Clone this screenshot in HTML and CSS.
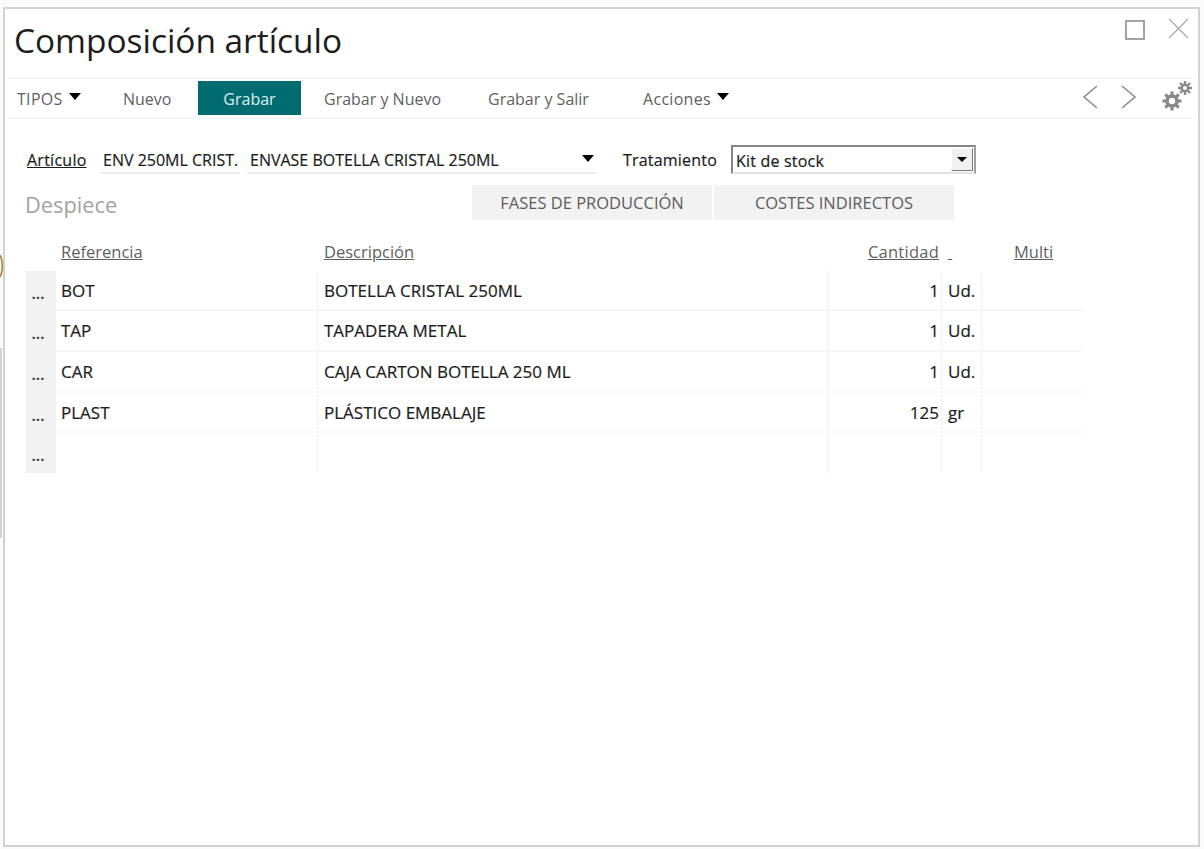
FILE: index.html
```html
<!DOCTYPE html>
<html lang="es">
<head>
<meta charset="utf-8">
<title>Composición artículo</title>
<link rel="stylesheet" href="styles.css">
</head>
<body>
<svg class="behind-arc" width="3" height="24" viewBox="0 0 3 24"><path d="M0 1C3 6 3 18 0 23" fill="none" stroke="#a8742c" stroke-width="1.4"/></svg>
<div class="behind-bar"></div>
<div class="window">
  <header class="titlebar">
    <h1 class="title">Composición artículo</h1>
    <div class="winctl">
      <svg width="20" height="20" viewBox="0 0 20 20"><rect x="1" y="1" width="18" height="18" fill="none" stroke="#8c8c8c" stroke-width="1.6"/></svg>
      <svg class="ic-close" width="21" height="21" viewBox="0 0 21 21"><path d="M1 1L20 20M20 1L1 20" fill="none" stroke="#a6a6a6" stroke-width="1.1"/></svg>
    </div>
  </header>
  <nav class="toolbar">
    <span class="tool tipos">TIPOS<i class="caret"></i></span>
    <span class="tool nuevo">Nuevo</span>
    <span class="tool grabar">Grabar</span>
    <span class="tool gnuevo">Grabar y Nuevo</span>
    <span class="tool gsalir">Grabar y Salir</span>
    <span class="tool acciones">Acciones<i class="caret"></i></span>
    <div class="toolright">
      <svg width="16" height="24" viewBox="0 0 16 24"><path d="M15 1L2 12L15 23" fill="none" stroke="#8c8c8c" stroke-width="1.6"/></svg>
      <svg class="next" width="16" height="24" viewBox="0 0 16 24"><path d="M1 1L14 12L1 23" fill="none" stroke="#8c8c8c" stroke-width="1.6"/></svg>
      <svg class="gears" width="32" height="32" viewBox="0 0 32 32">
        <g fill="none" stroke="#8a8a8a">
          <circle cx="11" cy="20" r="5" stroke-width="3.6"/>
          <path d="M11 10.500V14M11 26V29.500M1.500 20H5M17 20H20.500M4.300 13.300L6.800 15.800M15.200 24.200L17.700 26.700M4.300 26.700L6.800 24.200M15.200 15.800L17.700 13.300" stroke-width="3.2"/>
          <circle cx="24" cy="7" r="3.300" stroke-width="2.600"/>
          <path d="M24 0V3M24 11V14M17 7H20M28 7H31M19 2L21 4M27 10L29 12M19 12L21 10M27 4L29 2" stroke-width="2.400"/>
        </g>
      </svg>
    </div>
  </nav>
  <section class="form">
    <u class="lbl-art">Artículo</u>
    <span class="field code">ENV 250ML CRIST.</span>
    <span class="field desc">ENVASE BOTELLA CRISTAL 250ML<i class="caret"></i></span>
    <span class="lbl-trat">Tratamiento</span>
    <span class="select"><span class="select-val">Kit de stock</span><span class="select-btn"><i class="caret small"></i></span></span>
  </section>
  <section class="tabsrow">
    <h2 class="sub">Despiece</h2>
    <div class="tabs">
      <span class="tab">FASES DE PRODUCCIÓN</span>
      <span class="tab">COSTES INDIRECTOS</span>
    </div>
  </section>
  <section class="grid">
    <div class="gh"></div>
    <div class="gh"><u>Referencia</u></div>
    <div class="gh"><u>Descripción</u></div>
    <div class="gh num"><u>Cantidad</u></div>
    <div class="gh"><u>&nbsp;</u></div>
    <div class="gh multi"><u>Multi</u></div>

    <div class="dots">...</div><div class="c">BOT</div><div class="c">BOTELLA CRISTAL 250ML</div><div class="c num">1</div><div class="c">Ud.</div><div class="c"></div>
    <div class="dots">...</div><div class="c">TAP</div><div class="c">TAPADERA METAL</div><div class="c num">1</div><div class="c">Ud.</div><div class="c"></div>
    <div class="dots">...</div><div class="c">CAR</div><div class="c">CAJA CARTON BOTELLA 250 ML</div><div class="c num">1</div><div class="c">Ud.</div><div class="c"></div>
    <div class="dots">...</div><div class="c">PLAST</div><div class="c">PLÁSTICO EMBALAJE</div><div class="c num">125</div><div class="c">gr</div><div class="c"></div>
    <div class="dots">...</div><div class="c last"></div><div class="c last"></div><div class="c last"></div><div class="c last"></div><div class="c last"></div>
  </section>
</div>
</body>
</html>
```
FILE: styles.css
```css
* { box-sizing: border-box; }
html, body { margin: 0; height: 849px; overflow: hidden; }
body {
  background: #fbfbfb;
  padding: 7px 0 1px 3px;
  font-family: "Open Sans", "Noto Sans", sans-serif;
  font-size: 16px;
  color: #1c1c1c;
  position: relative;
}
.behind-arc { position: absolute; left: 0; top: 254px; }
.behind-bar {
  position: absolute;
  left: 0; top: 348px;
  width: 2px; height: 190px;
  background: #d4d4d4;
}
.window {
  width: 1197px;
  height: 840px;
  background: #fff;
  border: 2px solid #d2d2d2;
  padding: 0 0 0 3px;
}
.titlebar { height: 68px; display: flex; justify-content: space-between; }
.title {
  margin: 6px 0 0 6px;
  font-weight: 400;
  font-size: 33.400px;
  line-height: 50px;
  color: #1d1d1d;
}
.winctl { display: flex; gap: 23px; padding: 11px 9px 0 0; align-items: flex-start; }
.ic-close { margin-top: -2px; }
.toolbar {
  height: 42px;
  width: 1185px;
  border-top: 2px solid #f4f4f4;
  border-bottom: 2px solid #f4f4f4;
  display: flex;
  align-items: center;
  color: #5f5f5f;
}
.tool { display: flex; align-items: center; height: 34px; flex: none; padding-top: 2px; }
.caret {
  display: inline-block;
  width: 0; height: 0;
  border-left: 6.500px solid transparent;
  border-right: 6.500px solid transparent;
  border-top: 7px solid #000;
}
.tipos { width: 115px; padding-left: 9px; letter-spacing: .3px; }
.tipos .caret, .acciones .caret { margin: -5px 0 0 6px; }
.nuevo { width: 75px; }
.grabar {
  width: 103px;
  background: #016c70;
  color: #dfeeee;
  justify-content: center;
  margin-top: -1px;
}
.gnuevo { width: 164px; padding-left: 23px; }
.gsalir { width: 178px; padding-left: 23px; }
.acciones { letter-spacing: .3px; }
.toolright {
  margin-left: auto;
  display: flex;
  align-items: center;
  margin-top: -2px;
}
.toolright .next { margin-left: 23px; }
.toolright .gears { margin-left: 24px; }
.form {
  display: flex;
  align-items: flex-start;
  height: 39px;
  margin-top: 27px;
  padding-left: 19px;
  -webkit-text-stroke: .2px #1c1c1c;
}
.lbl-art { width: 73px; line-height: 29px; letter-spacing: .25px; }
.field {
  display: flex;
  align-items: center;
  justify-content: space-between;
  height: 28px;
  border-bottom: 2px solid #eeeeee;
  padding: 2px 0 0 3px;
  margin-right: 7px;
  white-space: nowrap;
}
.code { width: 140px; }
.desc { width: 350px; padding-right: 3px; }
.desc .caret { margin-top: -4px; }
.lbl-trat { margin-left: 19px; width: 108px; line-height: 28px; letter-spacing: .2px; }
.select {
  width: 245px;
  height: 29px;
  margin-top: -1px;
  border: 2px solid;
  border-color: #858585 #a0a0a0 #e2e2e2 #858585;
  display: flex;
  justify-content: space-between;
  padding: 1px;
}
.select-val { padding-left: 2px; line-height: 26px; letter-spacing: .2px; }
.select-btn {
  width: 22px;
  background: #f0f0f0;
  border: 1px solid;
  border-color: #fff #777 #777 #fff;
  display: flex;
  align-items: center;
  justify-content: center;
}
.caret.small {
  border-left-width: 5px;
  border-right-width: 5px;
  border-top-width: 5px;
}
.tabsrow {
  display: flex;
  height: 35px;
  padding-left: 17px;
}
.sub {
  margin: 0;
  width: 447px;
  font-weight: 400;
  font-size: 21.800px;
  line-height: 40px;
  color: #a2a2a2;
}
.tabs { display: flex; gap: 2px; }
.tab {
  background: #f2f2f2;
  color: #5c5c5c;
  display: flex;
  align-items: center;
  justify-content: center;
  width: 240px;
  height: 35px;
  font-size: 16.500px;
}
.grid {
  display: grid;
  grid-template-columns: 30px 263px 510px 114px 40px 100px;
  grid-template-rows: 34px 40px 41px 41px 40px 40px;
  margin: 17px 0 0 18px;
  width: 1057px;
  font-size: 17px;
}
.gh {
  padding-left: 5px;
  color: #5f5f5f;
  font-size: 16.500px;
  font-weight: 400;
  line-height: 30px;
}
.gh.num { text-align: right; padding-right: 4px; }
.gh.num u { letter-spacing: .25px; }
.gh.multi { padding-left: 31px; }
.dots {
  background: #f2f2f2;
  text-align: center;
  font-size: 15px;
  line-height: 44px;
  font-weight: 700;
  color: #444;
  padding-right: 6px;
}
.c {
  padding-left: 5px;
  line-height: 40px;
  border-bottom: 2px solid #f6f6f6;
  border-right: 2px solid #f6f6f6;
  -webkit-text-stroke: .2px #1c1c1c;
}
.c:nth-child(6n) { border-right: 0; }
.c.num { text-align: right; padding-right: 2px; }
.c.last { border-bottom: 0; }
```
